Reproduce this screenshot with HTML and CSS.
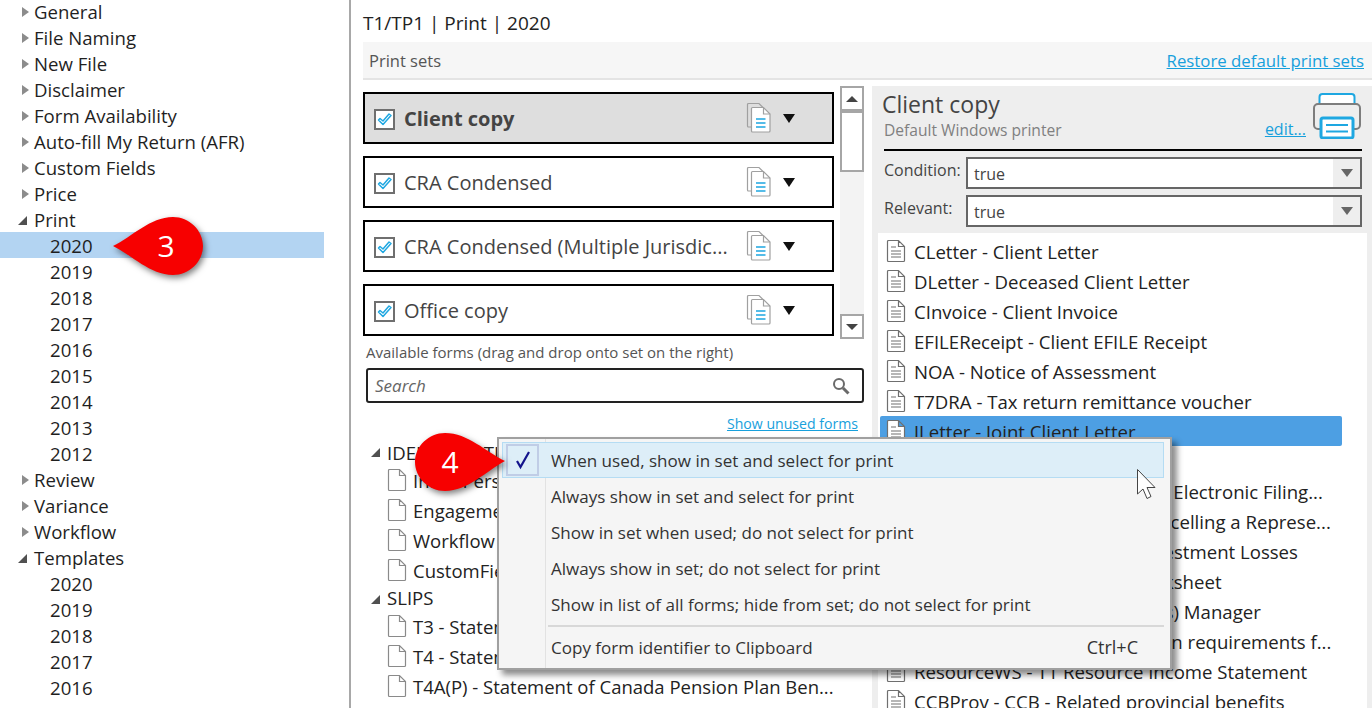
FILE: index.html
```html
<!DOCTYPE html>
<html lang="en">
<head>
<meta charset="utf-8">
<title>T1/TP1 Print</title>
<link rel="stylesheet" href="styles.css">
</head>
<body>
<svg class="sprite" width="0" height="0" aria-hidden="true">
  <symbol id="doc" viewBox="0 0 20 24"><path d="M1.5 2.5a1 1 0 0 1 1-1h10l6 6v14a1 1 0 0 1-1 1h-15a1 1 0 0 1-1-1z M12.5 1.5v6h6" fill="#fff" stroke="#8a8a8a" stroke-width="1.2"/></symbol>
  <symbol id="doclines" viewBox="0 0 20 24"><path d="M1.5 2.5a1 1 0 0 1 1-1h10l6 6v14a1 1 0 0 1-1 1h-15a1 1 0 0 1-1-1z M12.5 1.5v6h6" fill="#fff" stroke="#6f6f6f" stroke-width="1.2"/><path d="M5 8h5M5 12h10M5 15h10M5 18h10" stroke="#6f6f6f" stroke-width="1.2"/></symbol>
  <symbol id="setdoc" viewBox="0 0 25 31"><path d="M5 25H2.500a1 1 0 0 1-1-1V2.500a1 1 0 0 1 1-1H13l4 4" fill="none" stroke="#a0a0a0" stroke-width="1.200"/><path d="M5.500 6.500a1 1 0 0 1 1-1h11l6.500 6.500v17a1 1 0 0 1-1 1h-16.500a1 1 0 0 1-1-1z" fill="#fff" stroke="#a0a0a0" stroke-width="1.200"/><path d="M17.500 5.500v6.500h6.500" fill="none" stroke="#a0a0a0" stroke-width="1.200"/><path d="M10 17h9.500M10 21h9.500M10 25h9.500" stroke="#1ea7e1" stroke-width="1.300"/></symbol>
  <symbol id="tick" viewBox="0 0 21 21"><rect x="1" y="1" width="19" height="19" fill="#fff" stroke="#6f6f6f" stroke-width="2"/><path d="M4.500 11l4.500 4.500L17 6.500l-2-1.500-6 7-3-2.500z" fill="#fff" stroke="#1ea7e1" stroke-width="1.500" stroke-linejoin="round"/></symbol>
</svg>

<div class="app">
  <nav class="sidebar">
    <div class="node"><i class="tw closed"></i>General</div>
    <div class="node"><i class="tw closed"></i>File Naming</div>
    <div class="node"><i class="tw closed"></i>New File</div>
    <div class="node"><i class="tw closed"></i>Disclaimer</div>
    <div class="node"><i class="tw closed"></i>Form Availability</div>
    <div class="node"><i class="tw closed"></i>Auto-fill My Return (AFR)</div>
    <div class="node"><i class="tw closed"></i>Custom Fields</div>
    <div class="node"><i class="tw closed"></i>Price</div>
    <div class="node"><i class="tw open"></i>Print</div>
    <div class="node year selected">2020</div>
    <div class="node year">2019</div>
    <div class="node year">2018</div>
    <div class="node year">2017</div>
    <div class="node year">2016</div>
    <div class="node year">2015</div>
    <div class="node year">2014</div>
    <div class="node year">2013</div>
    <div class="node year">2012</div>
    <div class="node"><i class="tw closed"></i>Review</div>
    <div class="node"><i class="tw closed"></i>Variance</div>
    <div class="node"><i class="tw closed"></i>Workflow</div>
    <div class="node"><i class="tw open"></i>Templates</div>
    <div class="node year">2020</div>
    <div class="node year">2019</div>
    <div class="node year">2018</div>
    <div class="node year">2017</div>
    <div class="node year">2016</div>
    <div class="node year">2015</div>
  </nav>

  <main class="main">
    <h1 class="title">T1/TP1 | Print | 2020</h1>
    <div class="bar">
      <span class="bar-label">Print sets</span>
      <a class="bar-link">Restore default print sets</a>
    </div>
    <div class="panes">
      <section class="left">
        <div class="sets">
          <div class="cards">
            <div class="card active"><svg class="tick"><use href="#tick"/></svg><span class="card-name">Client copy</span><svg class="setdoc"><use href="#setdoc"/></svg><i class="drop"></i></div>
            <div class="card"><svg class="tick"><use href="#tick"/></svg><span class="card-name">CRA Condensed</span><svg class="setdoc"><use href="#setdoc"/></svg><i class="drop"></i></div>
            <div class="card"><svg class="tick"><use href="#tick"/></svg><span class="card-name">CRA Condensed (Multiple Jurisdic...</span><svg class="setdoc"><use href="#setdoc"/></svg><i class="drop"></i></div>
            <div class="card"><svg class="tick"><use href="#tick"/></svg><span class="card-name">Office copy</span><svg class="setdoc"><use href="#setdoc"/></svg><i class="drop"></i></div>
          </div>
          <div class="scroll">
            <div class="sb-btn"><i class="sb-up"></i></div>
            <div class="sb-thumb"></div>
            <div class="sb-track"></div>
            <div class="sb-btn"><i class="sb-down"></i></div>
          </div>
        </div>
        <div class="avail">Available forms (drag and drop onto set on the right)</div>
        <div class="search">
          <span class="search-text">Search</span>
          <svg class="search-icon" viewBox="0 0 18 18"><circle cx="7" cy="7" r="5" fill="none" stroke="#6a6a6a" stroke-width="2"/><path d="M11 11l5.500 5.500" stroke="#6a6a6a" stroke-width="3"/></svg>
        </div>
        <div class="unused"><a class="unused-link">Show unused forms</a></div>
        <div class="forms">
          <div class="group"><i class="tw open"></i>IDENTIFICATION</div>
          <div class="form"><svg class="doc"><use href="#doc"/></svg>Info - Personal</div>
          <div class="form"><svg class="doc"><use href="#doc"/></svg>Engagement</div>
          <div class="form"><svg class="doc"><use href="#doc"/></svg>Workflow</div>
          <div class="form"><svg class="doc"><use href="#doc"/></svg>CustomFields</div>
          <div class="group slips"><i class="tw open"></i>SLIPS</div>
          <div class="form"><svg class="doc"><use href="#doc"/></svg>T3 - Statement of Trust Income</div>
          <div class="form"><svg class="doc"><use href="#doc"/></svg>T4 - Statement of Remuneration</div>
          <div class="form"><svg class="doc"><use href="#doc"/></svg>T4A(P) - Statement of Canada Pension Plan Ben...</div>
        </div>
      </section>
      <section class="right">
        <div class="rhead">
          <div class="rhead-text">
            <div class="rname">Client copy</div>
            <div class="rsub">Default Windows printer</div>
          </div>
          <a class="edit">edit...</a>
          <svg class="printer" viewBox="0 0 48 46"><rect x="6.500" y="1" width="35" height="20" rx="3" fill="#fff" stroke="#1ea7e1" stroke-width="2"/><path d="M7 36H5a4 4 0 0 1-4-4V15a4 4 0 0 1 4-4h38a4 4 0 0 1 4 4v17a4 4 0 0 1-4 4h-2" fill="#eee" stroke="#7d7d7d" stroke-width="2"/><rect x="8" y="25" width="32" height="20" rx="2" fill="#fff" stroke="#1ea7e1" stroke-width="3"/><path d="M13 32h22M13 38.500h22" stroke="#1ea7e1" stroke-width="2"/></svg>
        </div>
        <div class="fields">
          <div class="field"><label class="field-label">Condition:</label><div class="combo"><span class="combo-val">true</span><span class="combo-btn"><i class="combo-arrow"></i></span></div></div>
          <div class="field"><label class="field-label">Relevant:</label><div class="combo"><span class="combo-val">true</span><span class="combo-btn"><i class="combo-arrow"></i></span></div></div>
        </div>
        <div class="rlist">
          <div class="ritem"><svg class="doc"><use href="#doclines"/></svg>CLetter - Client Letter</div>
          <div class="ritem"><svg class="doc"><use href="#doclines"/></svg>DLetter - Deceased Client Letter</div>
          <div class="ritem"><svg class="doc"><use href="#doclines"/></svg>CInvoice - Client Invoice</div>
          <div class="ritem"><svg class="doc"><use href="#doclines"/></svg>EFILEReceipt - Client EFILE Receipt</div>
          <div class="ritem"><svg class="doc"><use href="#doclines"/></svg>NOA - Notice of Assessment</div>
          <div class="ritem"><svg class="doc"><use href="#doclines"/></svg>T7DRA - Tax return remittance voucher</div>
          <div class="ritem picked"><svg class="doc"><use href="#doclines"/></svg>JLetter - Joint Client Letter</div>
          <div class="ritem"><svg class="doc"><use href="#doclines"/></svg>T1 - Jacket</div>
          <div class="ritem"><svg class="doc"><use href="#doclines"/></svg>T183 - Information Return for Electronic Filing...</div>
          <div class="ritem"><svg class="doc"><use href="#doclines"/></svg>Ag - T1013 Authorizing or Cancelling a Represe...</div>
          <div class="ritem"><svg class="doc"><use href="#doclines"/></svg>T936WS - Cumulative Net Investment Losses</div>
          <div class="ritem"><svg class="doc"><use href="#doclines"/></svg>Summary - Tax Estimate Worksheet</div>
          <div class="ritem"><svg class="doc"><use href="#doclines"/></svg>Installments - T1 (Installments) Manager</div>
          <div class="ritem"><svg class="doc"><use href="#doclines"/></svg>T1135WS - Foreign Information requirements f...</div>
          <div class="ritem"><svg class="doc"><use href="#doclines"/></svg>ResourceWS - T1 Resource Income Statement</div>
          <div class="ritem"><svg class="doc"><use href="#doclines"/></svg>CCBProv - CCB - Related provincial benefits</div>
        </div>
      </section>
    </div>
  </main>
</div>

<div class="menu">
  <div class="mi hot"><span class="mi-check"><svg viewBox="0 0 16 20" width="16" height="20"><path d="M2 11l3.500 6L14 2" fill="none" stroke="#14148c" stroke-width="2.200"/></svg></span><span class="mi-text">When used, show in set and select for print</span></div>
  <div class="mi"><span class="mi-text">Always show in set and select for print</span></div>
  <div class="mi"><span class="mi-text">Show in set when used; do not select for print</span></div>
  <div class="mi"><span class="mi-text">Always show in set; do not select for print</span></div>
  <div class="mi"><span class="mi-text">Show in list of all forms; hide from set; do not select for print</span></div>
  <div class="msep"></div>
  <div class="mi copy"><span class="mi-text">Copy form identifier to Clipboard</span><span class="mi-key">Ctrl+C</span></div>
</div>

<svg class="cursor" viewBox="0 0 20 30"><path d="M.5.500V25l5.500-5 4 9.500 4-2-4-9h8z" fill="#fff" fill-opacity=".85" stroke="#444" stroke-width="1"/></svg>

<div class="pin pin3">
  <svg class="pin-shape" viewBox="0 0 92 60"><path d="M1 30C20 21 38 1 61 1c16 0 30 13 30 29S77 59 61 59C38 59 20 39 1 30z" fill="#f70000"/></svg>
  <span class="pin-num">3</span>
</div>
<div class="pin pin4">
  <svg class="pin-shape" viewBox="0 0 92 60"><path d="M91 29C72 20 54 1 31 1 15 1 1 14 1 30s14 29 30 29c23 0 41-20 60-30z" fill="#f70000"/></svg>
  <span class="pin-num">4</span>
</div>
</body>
</html>
```

FILE: styles.css
```css
* { box-sizing: border-box; }
html, body { margin: 0; height: 100%; overflow: hidden; }
body { font-family: "Open Sans", "Liberation Sans", sans-serif; font-size: 18.600px; color: #222; background: #fff; position: relative; }
.sprite { position: absolute; }
.app { display: flex; height: 708px; overflow: hidden; }

.sidebar { width: 351px; flex: none; padding: 0 25px 0 0; margin-top: -1px; border-right: 2px solid #a8a8a8; height: 720px; font-size: 18.600px; }
.node { height: 26px; line-height: 26px; padding-left: 34px; position: relative; color: #1f1f1f; white-space: nowrap; }
.node.year { padding-left: 50px; }
.node.selected { background: #b3d4f2; margin: -1px 0 1px; line-height: 28px; }
.tw { position: absolute; display: block; width: 0; height: 0; }
.node .tw { left: 22px; top: 8px; }
.tw.closed { border-left: 7px solid #8c8c8c; border-top: 5px solid transparent; border-bottom: 5px solid transparent; }
.tw.open { border-right: 9px solid #505050; border-top: 9px solid transparent; }
.node .tw.open { left: 18px; top: 9px; }

.main { flex: 1; min-width: 0; padding-left: 12px; }
.title { margin: 0; height: 42px; font-size: 19px; font-weight: 400; line-height: 47px; color: #222; }
.bar { height: 38px; background: #f6f6f6; border-bottom: 2px solid #e4e4e4; display: flex; justify-content: space-between; align-items: center; padding: 0 8px 0 6px; }
.bar-label { font-size: 16.500px; color: #555; }
.bar-link { font-size: 16.800px; color: #17a0dc; text-decoration: underline; }

.panes { display: flex; gap: 8px; margin-top: 6px; }
.left { width: 501px; flex: none; }
.sets { display: flex; gap: 6px; height: 253px; }
.cards { width: 471px; flex: none; padding-top: 6px; display: flex; flex-direction: column; gap: 12px; }
.card { height: 52px; border: 2px solid #000; display: flex; align-items: center; padding: 0 0 0 9px; background: #fff; }
.card.active { background: #dedede; }
.tick { width: 21px; height: 21px; flex: none; margin-top: 3px; }
.card-name { flex: 1; margin: 0 0 0 9px; color: #444; font-size: 20px; white-space: nowrap; }
.card.active .card-name { font-weight: 700; }
.setdoc { width: 25px; height: 31px; flex: none; margin: -2px 12px 0 0; }
.drop { width: 0; height: 0; border-top: 9px solid #111; border-left: 6.500px solid transparent; border-right: 6.500px solid transparent; margin: 0 37px 0 0; flex: none; }

.scroll { width: 24px; flex: none; display: flex; flex-direction: column; background: #f3f3f3; }
.sb-btn { height: 25px; border: 2px solid #a6a6a6; background: #fff; display: flex; align-items: center; justify-content: center; flex: none; }
.sb-up { border-bottom: 6px solid #444; border-left: 6px solid transparent; border-right: 6px solid transparent; }
.sb-down { border-top: 6px solid #444; border-left: 6px solid transparent; border-right: 6px solid transparent; }
.sb-thumb { height: 61px; border: 2px solid #a6a6a6; background: #fff; flex: none; }
.sb-track { flex: 1; }

.avail { font-size: 15px; line-height: 20px; margin: 3px 0 0 3px; color: #555; }
.search { margin: 6px 0 0 3px; height: 35px; border: 2px solid #222; border-radius: 3px; display: flex; align-items: center; justify-content: space-between; padding: 0 12px 0 7px; }
.search-text { font-style: italic; font-size: 17px; color: #666; }
.search-icon { width: 18px; height: 18px; }
.unused { text-align: right; padding-right: 6px; height: 32px; line-height: 38px; }
.unused-link { font-size: 14.100px; color: #17a0dc; text-decoration: underline; }

.forms { margin-top: 3px; }
.group { height: 27px; line-height: 29px; padding-left: 24px; position: relative; color: #222; white-space: nowrap; }
.group .tw { left: 8px; top: 10px; }
.group.slips { height: 26px; line-height: 26px; }
.form { height: 30px; display: flex; align-items: center; gap: 6px; padding-left: 24px; white-space: nowrap; color: #222; font-size: 18.500px; }
.doc { width: 20px; height: 24px; flex: none; }

.right { width: 500px; flex: none; background: #eee; padding: 0 5px 0 6px; height: 640px; margin-right: -1px; }
.rhead { display: flex; height: 65px; margin: 0 5px 0 6px; border-bottom: 2px solid #000; position: relative; align-items: flex-end; }
.rhead-text { flex: 1; padding-bottom: 8px; margin-left: -2px; }
.rname { font-size: 23px; line-height: 29px; color: #444; }
.rsub { font-size: 15.600px; line-height: 22px; color: #808080; padding-left: 2px; }
.edit { font-size: 16px; color: #17a0dc; text-decoration: underline; margin: 0 7px 9px 0; }
.printer { width: 48px; height: 46px; flex: none; margin: 0 1px 10px 0; }
.fields { padding: 3px 0; }
.field { display: flex; align-items: center; height: 38px; padding-left: 6px; }
.field-label { width: 82px; font-size: 16px; color: #444; margin-top: -6px; flex: none; }
.combo { width: 396px; height: 32px; border: 2px solid #666; background: #fff; display: flex; justify-content: space-between; flex: none; }
.combo-val { padding-left: 6px; line-height: 30px; font-size: 16px; color: #444; }
.combo-btn { width: 27px; background: #eee; display: flex; align-items: center; justify-content: center; }
.combo-arrow { border-top: 8px solid #666; border-left: 6px solid transparent; border-right: 6px solid transparent; }
.rlist { background: #fff; height: 520px; padding: 3px 0 0 2px; }
.ritem { height: 30px; width: 462px; display: flex; align-items: center; gap: 8px; padding-left: 6px; white-space: nowrap; color: #222; }
.ritem.picked { background: #4d9fe3; border-radius: 2px; }

.menu { position: absolute; left: 497px; top: 437px; width: 675px; height: 233px; background: #f5f5f5; border: 2px solid #a0a0a0; box-shadow: 5px 5px 6px rgba(0,0,0,.45); padding: 3px 6px 0 3px; background-image: linear-gradient(#e2e2e2, #e2e2e2); background-size: 1px 100%; background-position: 46px 0; background-repeat: no-repeat; }
.mi { height: 36px; display: flex; align-items: center; padding-left: 49px; color: #333; font-size: 17.050px; position: relative; white-space: nowrap; }
.mi.hot { background: #ddeef8; border: 1px solid #b5dcf3; padding-left: 48px; }
.mi-check { position: absolute; left: 3px; top: 1px; width: 33px; height: 32px; border: 2px solid #c0cde6; display: flex; align-items: center; justify-content: center; }
.msep { height: 2px; background: #d8d8d8; margin: 3px 0 3px 46px; }
.mi.copy { justify-content: space-between; padding: 0 26px 2px 49px; }
.mi-key { font-size: 18px; }

.cursor { position: absolute; left: 1137px; top: 469px; width: 20px; height: 30px; }

.pin { position: absolute; width: 92px; height: 60px; display: flex; align-items: center; justify-content: center; }
.pin-shape { position: absolute; inset: 0; width: 100%; height: 100%; filter: drop-shadow(2px 3px 3px rgba(0,0,0,.5)); }
.pin-num { position: relative; color: #fff; font-size: 30px; line-height: 1; }
.pin3 { left: 112px; top: 216px; padding-left: 16px; }
.pin4 { left: 414px; top: 432px; padding-right: 20px; }
```
